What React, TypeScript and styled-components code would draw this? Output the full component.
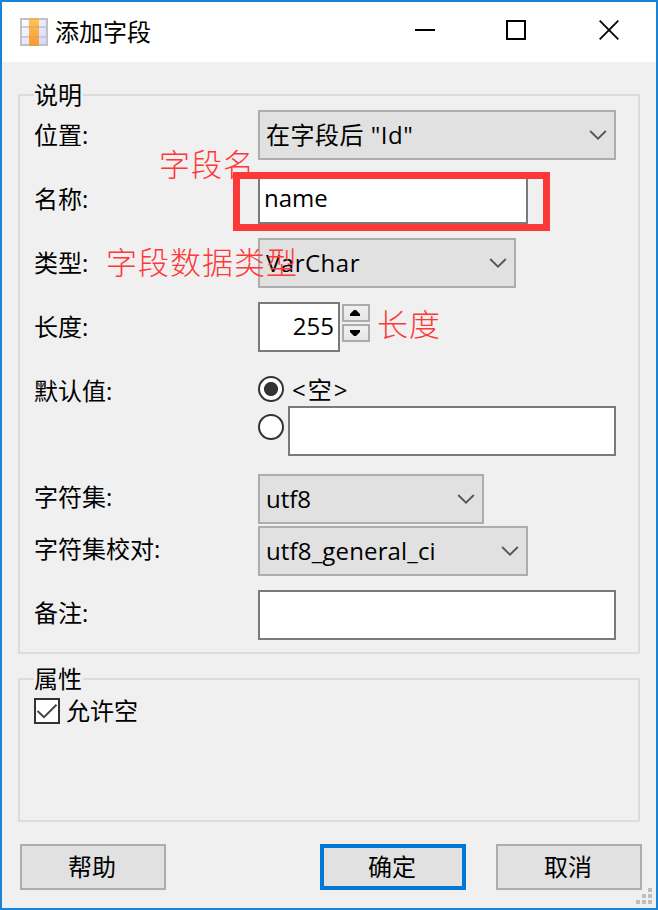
import React from 'react';
import styled, { createGlobalStyle } from 'styled-components';

const GlobalStyle = createGlobalStyle`
  * { box-sizing: border-box; }
  body { margin: 0; }
`;

const Window = styled.div`
  position: relative;
  display: flex;
  flex-direction: column;
  width: 658px;
  height: 910px;
  border: 2px solid #1883d7;
  background: #f0f0f0;
  color: #000;
  font: 24px/32px 'Open Sans', 'Noto Sans CJK SC', sans-serif;
  white-space: nowrap;
  overflow: hidden;
`;

const TitleBar = styled.header`
  display: flex;
  align-items: center;
  height: 60px;
  padding: 0 37px 0 18px;
  background: #fff;
`;

const Title = styled.h1`
  flex: 1;
  margin: 0 0 0 7px;
  font-size: 24px;
  font-weight: 400;
  line-height: 32px;
`;

const WindowControls = styled.div`
  display: flex;
  align-items: center;
  gap: 71px;
  height: 60px;
  padding-bottom: 4px;
  svg { display: block; }
  svg:last-child { margin-left: 2px; }
`;

const Group = styled.section<{ $height: number; $top: number }>`
  display: flex;
  flex-direction: column;
  height: ${(p) => p.$height}px;
  margin: ${(p) => p.$top}px 16px 0;
  padding: 0 14px;
  border: 2px solid #dcdcdc;
`;

const Legend = styled.h2`
  align-self: flex-start;
  height: 26px;
  margin: -12px 0 0;
  padding-right: 1px;
  background: #f0f0f0;
  font-size: 24px;
  font-weight: 400;
  line-height: 22px;
`;

const Row = styled.div<{ $gap?: number }>`
  display: grid;
  grid-template-columns: 224px 1fr;
  align-items: start;
  margin-top: ${(p) => p.$gap ?? 14}px;
`;

const Label = styled.span<{ $lift?: number }>`
  height: 50px;
  line-height: ${(p) => 50 - (p.$lift ?? 0) * 2}px;
`;

const SelectBox = styled.button<{ $width: number; $spacing?: number }>`
  display: flex;
  align-items: center;
  justify-content: space-between;
  width: ${(p) => p.$width}px;
  height: 50px;
  padding: 0 7px 0 6px;
  border: 2px solid #adadad;
  background: #e1e1e1;
  color: #000;
  font: inherit;
  letter-spacing: ${(p) => p.$spacing ?? 0}px;
`;

const TextBox = styled.div<{ $width: number; $align?: string }>`
  width: ${(p) => p.$width}px;
  height: 50px;
  padding: 0 4px;
  border: 2px solid #7a7a7a;
  background: #fff;
  line-height: 43px;
  text-align: ${(p) => p.$align ?? 'left'};
`;

const Inline = styled.div`
  display: flex;
  align-items: flex-start;
`;

const Spinner = styled.div`
  display: flex;
  flex-direction: column;
  gap: 2px;
  padding: 2px 0 0 2px;
`;

const SpinButton = styled.button`
  display: flex;
  align-items: center;
  justify-content: center;
  width: 28px;
  height: 18px;
  padding: 0 2px 0 0;
  border: 2px solid #acacac;
  background: linear-gradient(#f0f0f0, #e6e6e6);
`;

const DefaultOptions = styled.div`
  height: 90px;
  padding-top: 10px;
`;

const Option = styled.div<{ $height: number }>`
  display: flex;
  align-items: flex-start;
  height: ${(p) => p.$height}px;
`;

const OptionText = styled.span`
  margin-left: 8px;
  line-height: 27px;
  letter-spacing: 2px;
`;

const Radio = styled.span<{ $checked?: boolean; $top?: number }>`
  flex: none;
  width: 26px;
  height: 26px;
  margin-top: ${(p) => p.$top ?? 0}px;
  border: 2px solid #333;
  border-radius: 50%;
  background: ${(p) => (p.$checked ? 'radial-gradient(circle, #333 6.6px, #fff 7.4px)' : '#fff')};
`;

const DefaultInput = styled(TextBox)`
  margin-left: 4px;
`;

const CheckRow = styled.div`
  display: flex;
  align-items: center;
  gap: 6px;
  height: 26px;
  margin-top: 4px;
`;

const CheckBox = styled.span`
  width: 26px;
  height: 26px;
  border: 2px solid #333;
  background: #fff;
  svg { display: block; }
`;

const Footer = styled.footer`
  display: flex;
  margin: 22px 14px 0 18px;
`;

const Button = styled.button<{ $primary?: boolean; $left?: number }>`
  width: 146px;
  height: 46px;
  margin-left: ${(p) => p.$left ?? 0}px;
  padding: 0 2px 0 0;
  border: ${(p) => (p.$primary ? '4px solid #0078d7' : '2px solid #adadad')};
  background: #e1e1e1;
  color: #000;
  font: inherit;
`;

const Highlight = styled.div`
  position: absolute;
  left: 231px;
  top: 170px;
  width: 317px;
  height: 59px;
  border: 7px solid #fd3838;
`;

const Note = styled.span<{ $x: number; $y: number }>`
  position: absolute;
  left: ${(p) => p.$x}px;
  top: ${(p) => p.$y}px;
  color: #fd3838;
  font: 300 31px/40px 'Noto Sans CJK SC', sans-serif;
  letter-spacing: 1px;
`;

const ResizeGrip = styled.svg`
  position: absolute;
  right: 4px;
  bottom: 4px;
`;

const TableIcon = () => (
  <svg width="28" height="28" viewBox="0 0 28 28">
    <defs>
      <linearGradient id="cells" x1="0" y1="0" x2="1" y2="1">
        <stop offset="0" stopColor="#fff" />
        <stop offset="1" stopColor="#d4d4fa" />
      </linearGradient>
      <linearGradient id="column" x1="0" y1="0" x2="0" y2="1">
        <stop offset="0" stopColor="#ffc45c" />
        <stop offset="1" stopColor="#fb9830" />
      </linearGradient>
    </defs>
    <rect x="1" y="1" width="26" height="26" fill="url(#cells)" stroke="#c0c0c8" strokeWidth="2" />
    <path d="M1 9H27M1 19H27" stroke="#c2c2cc" strokeWidth="1.6" />
    <rect x="9" y="0" width="10" height="28" fill="url(#column)" />
    <path d="M9 9H19M9 19H19M9 1H19M9 27H19" stroke="#d9a050" strokeWidth="1.4" opacity=".6" />
  </svg>
);

const Chevron = () => (
  <svg width="18" height="12" viewBox="0 0 18 12">
    <path d="M1.2 2L9 9.7L16.8 2" fill="none" stroke="#555" strokeWidth="1.8" />
  </svg>
);

const Triangle = ({ down = false }: { down?: boolean }) => (
  <svg width="10" height="6" viewBox="0 0 10 6">
    <path d={down ? 'M0 0H10V2L6 6H4L0 2Z' : 'M4 0H6L10 4V6H0V4Z'} />
  </svg>
);

interface SelectProps {
  value: string;
  width: number;
  spacing?: number;
}

const Select = ({ value, width, spacing }: SelectProps) => (
  <SelectBox $width={width} $spacing={spacing}>
    <span>{value}</span>
    <Chevron />
  </SelectBox>
);

export default function App() {
  return (
    <>
      <GlobalStyle />
      <Window>
        <TitleBar>
          <TableIcon />
          <Title>添加字段</Title>
          <WindowControls>
            <svg width="20" height="20"><path d="M0 10H20" stroke="#000" strokeWidth="2" /></svg>
            <svg width="20" height="20"><rect x="1" y="1" width="18" height="18" fill="none" stroke="#000" strokeWidth="2" /></svg>
            <svg width="20" height="20"><path d="M.7 .7L19.3 19.3M19.3 .7L.7 19.3" stroke="#000" strokeWidth="1.8" /></svg>
          </WindowControls>
        </TitleBar>

        <Group $height={560} $top={32}>
          <Legend>说明</Legend>
          <Row $gap={0}>
            <Label>位置:</Label>
            <Select value={'在字段后 "Id"'} width={358} spacing={0.5} />
          </Row>
          <Row>
            <Label>名称:</Label>
            <TextBox $width={270}>name</TextBox>
          </Row>
          <Row>
            <Label>类型:</Label>
            <Select value="VarChar" width={258} spacing={0.5} />
          </Row>
          <Row>
            <Label>长度:</Label>
            <Inline>
              <TextBox $width={82} $align="right">255</TextBox>
              <Spinner>
                <SpinButton aria-label="+"><Triangle /></SpinButton>
                <SpinButton aria-label="-"><Triangle down /></SpinButton>
              </Spinner>
            </Inline>
          </Row>
          <Row>
            <Label>默认值:</Label>
            <DefaultOptions>
              <Option $height={30}>
                <Radio $checked />
                <OptionText>&lt;空&gt;</OptionText>
              </Option>
              <Option $height={50}>
                <Radio $top={8} />
                <DefaultInput $width={328} />
              </Option>
            </DefaultOptions>
          </Row>
          <Row $gap={18}>
            <Label $lift={2}>字符集:</Label>
            <Select value="utf8" width={226} />
          </Row>
          <Row $gap={2}>
            <Label $lift={2}>字符集校对:</Label>
            <Select value="utf8_general_ci" width={270} spacing={0.15} />
          </Row>
          <Row>
            <Label $lift={2}>备注:</Label>
            <TextBox $width={358} />
          </Row>
        </Group>

        <Group $height={144} $top={24}>
          <Legend>属性</Legend>
          <CheckRow>
            <CheckBox>
              <svg width="22" height="22"><path d="M1.5 11L8 17.2L20.5 4.8" fill="none" stroke="#444" strokeWidth="2" /></svg>
            </CheckBox>
            <span>允许空</span>
          </CheckRow>
        </Group>

        <Footer>
          <Button>帮助</Button>
          <Button $primary $left={154}>确定</Button>
          <Button $left={30}>取消</Button>
        </Footer>

        <Highlight />
        <Note $x={157} $y={141}>字段名</Note>
        <Note $x={104} $y={239}>字段数据类型</Note>
        <Note $x={375} $y={301}>长度</Note>
        <ResizeGrip width="16" height="16" fill="#bfbfbf">
          <path d="M12 0h4v4h-4zM6 6h4v4H6zM12 6h4v4h-4zM0 12h4v4H0zM6 12h4v4H6zM12 12h4v4h-4z" />
        </ResizeGrip>
      </Window>
    </>
  );
}
